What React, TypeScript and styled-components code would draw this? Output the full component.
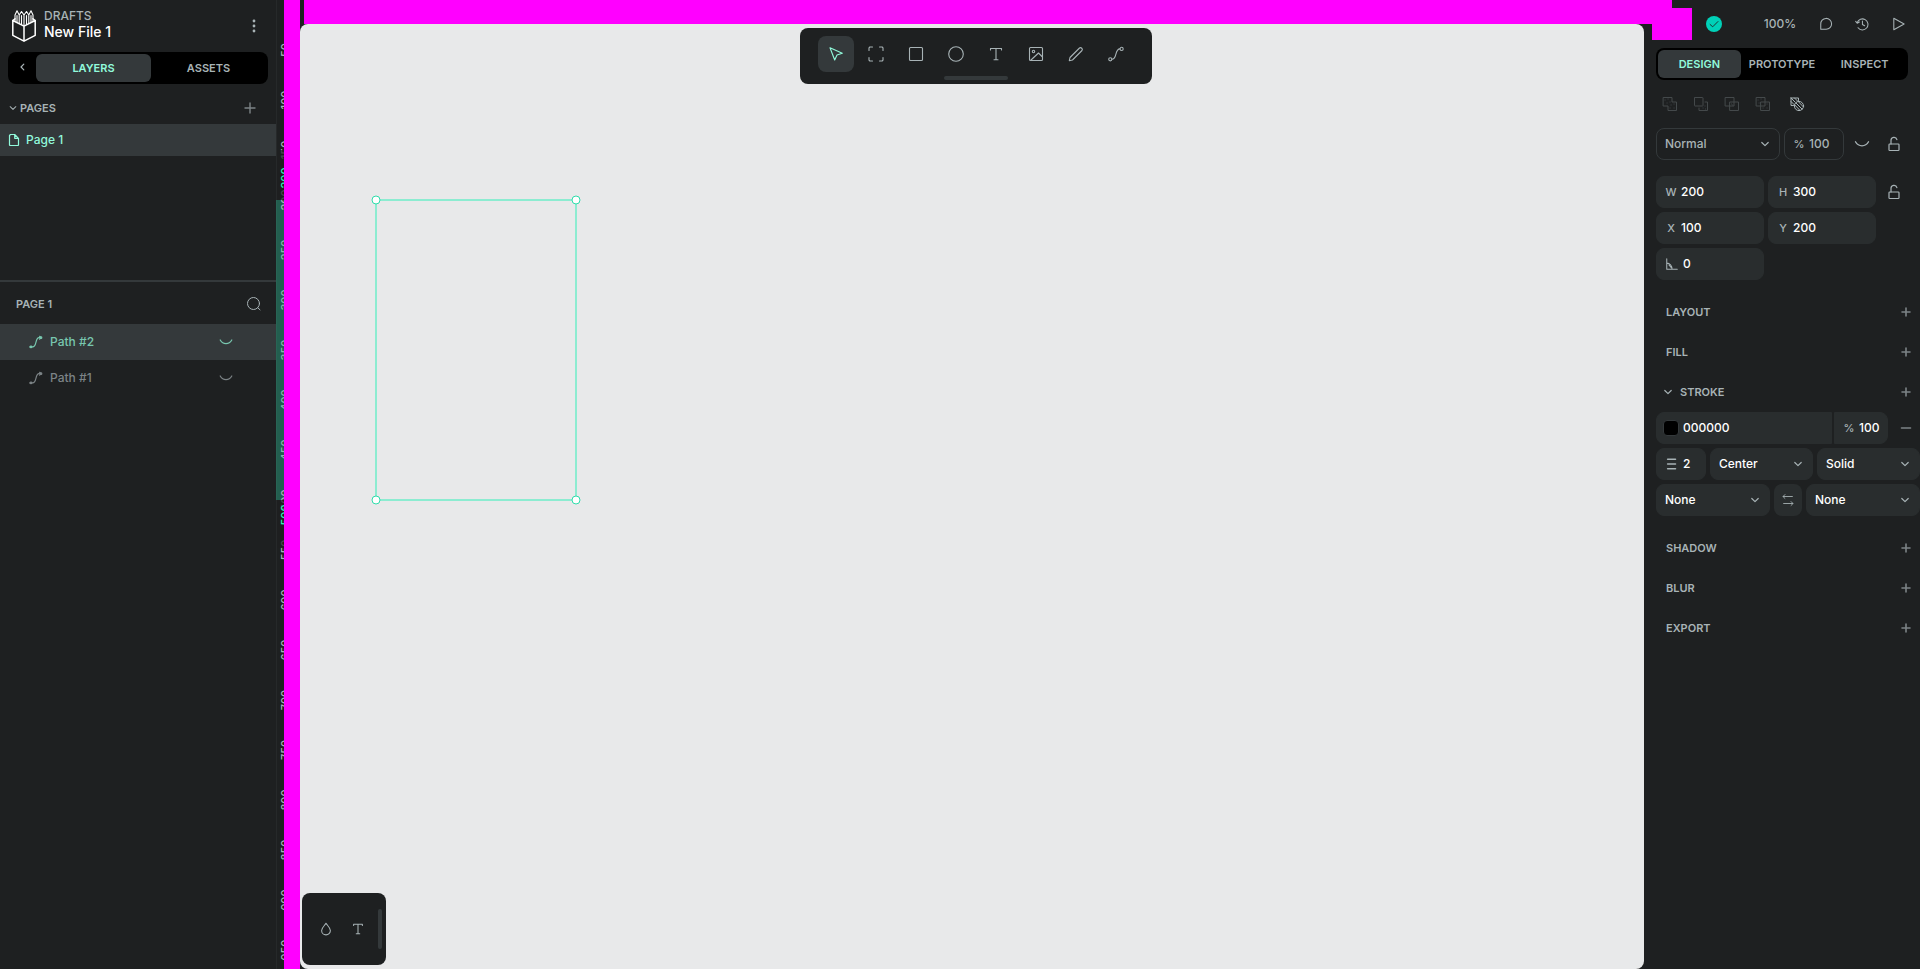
import React from "react";
import styled, { createGlobalStyle, css } from "styled-components";

const color = {
  panel: "#1e2021",
  raised: "#34393b",
  field: "#292d2e",
  black: "#000000",
  board: "#e8e9ea",
  text: "#ffffff",
  muted: "#a8b3b6",
  dim: "#7c8386",
  accent: "#91fadb",
  accentSoft: "#78c7af",
  select: "#31efb8",
  teal: "#00d1b8",
  mask: "#ff00ff",
};

const GlobalStyle = createGlobalStyle`
  * { box-sizing: border-box; }
  body {
    margin: 0;
    background: ${color.panel};
    color: ${color.muted};
    font: 500 12px/16px Inter, "Liberation Sans", sans-serif;
  }
  button, input, select { font: inherit; color: inherit; }
  h1, h2, p, ul { margin: 0; padding: 0; font: inherit; }
`;

/* ---------- shell ---------- */

const Shell = styled.div`
  position: relative;
  display: grid;
  grid-template-columns: 276px minmax(0, 1fr) 276px;
  min-height: 100vh;
  overflow: hidden;
`;

const Sidebar = styled.aside`
  display: flex;
  flex-direction: column;
  background: ${color.panel};
`;

const IconButton = styled.button<{ $size?: number; $tone?: string }>`
  display: inline-flex;
  align-items: center;
  justify-content: center;
  flex: none;
  width: ${(p) => p.$size ?? 28}px;
  height: ${(p) => p.$size ?? 28}px;
  padding: 0;
  border: 0;
  border-radius: 8px;
  background: none;
  color: ${(p) => p.$tone ?? color.muted};
  cursor: pointer;
`;

const Svg = styled.svg`
  display: block;
  flex: none;
  fill: none;
  stroke: currentColor;
  stroke-linecap: round;
  stroke-linejoin: round;
`;

type IconProps = { size?: number; children: React.ReactNode; weight?: number };
const Icon = ({ size = 16, weight = 1, children }: IconProps) => (
  <Svg width={size} height={size} viewBox="0 0 16 16" strokeWidth={weight} aria-hidden="true">
    {children}
  </Svg>
);

const Plus = () => <Icon weight={1.6}><path d="M8 4v8M4 8h8" /></Icon>;
const ChevronDown = ({ size = 16 }: { size?: number }) => (
  <Icon size={size} weight={1.2}><path d="M4.800 6.500 8 9.600l3.200-3.100" /></Icon>
);
const EyeClosed = ({ size = 16 }: { size?: number }) => (
  <Icon size={size} weight={1.2}><path d="M2.200 6c2.800 4.800 8.800 4.800 11.600 0" /></Icon>
);
const PathIcon = () => (
  <Icon weight={1.1}>
    <circle cx="2.300" cy="13.300" r="1.600" />
    <circle cx="13.600" cy="2.900" r="1.600" />
    <path d="M3.900 13.300C9.500 13.300 6.300 2.900 12 2.900" />
  </Icon>
);
const SmallPathIcon = () => (
  <Icon weight={1.2}>
    <circle cx="3" cy="12.900" r=".8" />
    <circle cx="13" cy="3.700" r=".8" />
    <path d="M1.800 12.900h2.800C9 12.900 7 3.700 11 3.700h2M11.600 2.300 13.300 3.700l-1.700 1.400" />
  </Icon>
);
const LockOpen = () => (
  <Icon weight={1.2}>
    <rect x="3" y="8" width="10" height="6.500" rx=".8" />
    <path d="M5 8V4.500a3 3 0 0 1 5.900-.9" />
  </Icon>
);

/* ---------- left side ---------- */

const FileHeader = styled.header`
  display: flex;
  align-items: center;
  height: 52px;
  padding: 0 8px 0 12px;
  gap: 8px;
`;

const FileNames = styled.div`
  flex: 1;
  padding-bottom: 4px;
`;

const FileName = styled.h1`
  font-size: 14px;
  color: ${color.text};
`;

const TabBar = styled.div<{ $side?: number }>`
  display: flex;
  height: 32px;
  margin: 0 ${(p) => p.$side ?? 8}px;
  padding: 2px;
  border-radius: 8px;
  background: ${color.black};
`;

const Tab = styled.button<{ $active?: boolean }>`
  flex: 1 1 0;
  padding: 0;
  border: 0;
  border-radius: 6px;
  font-size: 11px;
  font-weight: 600;
  text-transform: uppercase;
  background: ${(p) => (p.$active ? color.raised : "transparent")};
  color: ${(p) => (p.$active ? color.accent : color.muted)};
`;

const PagesPanel = styled.section`
  height: 198px;
  border-bottom: 2px solid ${color.raised};
`;

const PagesHeader = styled.div`
  display: flex;
  align-items: center;
  height: 40px;
  padding: 8px 12px 0 6px;
`;

const Caption = styled.h2`
  flex: 1;
  font-size: 11px;
  font-weight: 600;
  line-height: 16px;
  text-transform: uppercase;
`;

const Item = styled.li<{ $active?: boolean; $tall?: boolean }>`
  display: flex;
  align-items: center;
  height: ${(p) => (p.$tall ? 36 : 32)}px;
  padding: ${(p) => (p.$tall ? "0 36px 0 28px" : "0 6px")};
  gap: ${(p) => (p.$tall ? 6 : 4)}px;
  list-style: none;
  background: ${(p) => (p.$active ? color.raised : "transparent")};
  color: ${(p) => (!p.$tall ? color.accent : p.$active ? color.accentSoft : color.dim)};
`;

const ItemName = styled.span`
  flex: 1;
`;

const LayersHeader = styled.div`
  display: flex;
  align-items: center;
  height: 42px;
  padding: 2px 8px 0 16px;
`;

const Logo = () => (
  <Svg width="24" height="32" viewBox="0 0 24 32" strokeWidth="1.500" color={color.text} aria-label="Penpot" role="img">
    <path d="M.8 10.500 12 16.200l11.200-5.700v14.800L12 31.200.8 25.300ZM12 16.200v15" />
    <path d="M3 8.800.8 10.500M21 8.800l2.200 1.700" />
    <path
      strokeWidth="1.100"
      d="M3 11.500V5L5 .8 7.200 5v8.500M7.200 5 9.500 1.500 12 5l2.500-3.500L16.800 5v8.500M16.800 5 19 .8 21 5v6.500M9.500 5.500v9M14.500 5.500v9M12 5v11M5 5.500v7M19 5.500v7"
    />
  </Svg>
);

const LeftSidebar = () => (
  <Sidebar>
    <FileHeader>
      <Logo />
      <FileNames>
        <p>DRAFTS</p>
        <FileName>New File 1</FileName>
      </FileNames>
      <IconButton aria-label="File menu">
        <Icon>
          <g fill="currentColor" stroke="none">
            <circle cx="8" cy="3" r="1.400" /><circle cx="8" cy="8" r="1.400" /><circle cx="8" cy="13" r="1.400" />
          </g>
        </Icon>
      </IconButton>
    </FileHeader>
    <TabBar>
      <IconButton $size={26} aria-label="Collapse panel">
        <Icon weight={1.2}><path d="M8.800 5.200 6 8l2.800 2.800" /></Icon>
      </IconButton>
      <Tab $active>Layers</Tab>
      <Tab>Assets</Tab>
    </TabBar>
    <PagesPanel>
      <PagesHeader>
        <ChevronDown size={14} />
        <Caption>Pages</Caption>
        <IconButton aria-label="Add page" $tone={color.dim}>
          <Icon weight={1.400}><path d="M8 3v10M3 8h10" /></Icon>
        </IconButton>
      </PagesHeader>
      <ul>
        <Item $active>
          <Icon weight={1.2}>
            <path d="M4.500 2.500h4.200l3.800 3.800v6.700l-.5.500H4l-.5-.5V3.500ZM8.700 2.500v3.800h3.800" />
          </Icon>
          <ItemName>Page 1</ItemName>
        </Item>
      </ul>
    </PagesPanel>
    <LayersHeader>
      <Caption>Page 1</Caption>
      <IconButton aria-label="Search layers">
        <Icon><circle cx="7.500" cy="7.500" r="6" /><path d="m11.800 11.800 2.200 2" /></Icon>
      </IconButton>
    </LayersHeader>
    <ul>
      {["Path #2", "Path #1"].map((name, i) => (
        <Item key={name} $tall $active={i === 0}>
          <SmallPathIcon />
          <ItemName>{name}</ItemName>
          <IconButton $tone="inherit" aria-label={`Show ${name}`}><EyeClosed /></IconButton>
        </Item>
      ))}
    </ul>
  </Sidebar>
);

/* ---------- canvas ---------- */

const Workspace = styled.main`
  position: relative;
  display: grid;
  grid-template: 24px minmax(0, 1fr) / 24px minmax(0, 1fr);
  background: ${color.panel};
`;

const Board = styled.div`
  position: relative;
  grid-area: 2 / 2;
  display: flex;
  flex-direction: column;
  justify-content: space-between;
  border-radius: 8px;
  padding: 4px 2px;
  background: ${color.board};
`;

const Ruler = styled.svg`
  position: absolute;
  inset: 0 auto 0 0;
  width: 24px;
  height: 100%;
  font: 500 11px/16px Inter, sans-serif;
  text-anchor: middle;
`;

const Selection = styled.svg`
  position: absolute;
  left: 70px;
  top: 170px;
  stroke: ${color.select};
`;

const Toolbar = styled.div`
  position: relative;
  align-self: center;
  display: flex;
  gap: 4px;
  height: 56px;
  margin-left: 8px;
  padding: 8px 18px;
  border-radius: 8px;
  background: ${color.panel};
`;

const Tool = styled(IconButton)<{ $active?: boolean }>`
  width: 36px;
  height: 36px;
  ${(p) => p.$active && css`
    background: ${color.raised};
    color: ${color.accent};
  `}
`;

const Grip = styled.span<{ $vertical?: boolean }>`
  position: absolute;
  border-radius: 2px;
  background: ${color.raised};
  ${(p) => p.$vertical
    ? css`right: 4px; top: 16px; bottom: 16px; width: 4px;`
    : css`left: 144px; right: 144px; bottom: 4px; height: 4px;`}
`;

const Palette = styled.div`
  position: relative;
  display: flex;
  align-items: center;
  gap: 4px;
  width: 84px;
  height: 72px;
  padding-left: 10px;
  border-radius: 8px;
  background: ${color.panel};
`;

const tools: [string, React.ReactNode][] = [
  ["Move", <path d="m2 1.800 12.300 5.500-5.300 1.700L6.700 14Z" />],
  ["Board", <path d="M1 4.500V1.800L1.800 1H4.500M11.500 1h2.700l.8.8v2.700M15 11.500v2.700l-.8.8h-2.700M4.500 15H1.800l-.8-.8v-2.700" />],
  ["Rectangle", <rect x="1.500" y="1.500" width="13" height="13" rx="1" />],
  ["Ellipse", <circle cx="8" cy="8" r="7.300" />],
  ["Text", <path d="M2.500 4V2.500h11V4M8 2.500v11.300M6 13.800h4" />],
  ["Image", <g><rect x="1.500" y="1.500" width="13" height="13" rx="1" /><circle cx="5.500" cy="5.500" r="1.200" /><path d="m3 14 7.500-7 4 4" /></g>],
  ["Curve", <path d="M2 11.500 11.500 2c1.500-1.200 3.700 1 2.500 2.500L4.500 14 1.300 14.700Z" />],
];

const rulerMarks = Array.from({ length: 19 }, (_, i) => (i + 1) * 50);

const Canvas = () => (
  <Workspace>
    <Ruler aria-hidden="true">
      <rect width="1" height="100%" fill="#26292a" />
      <rect y="200" width="24" height="300" fill={color.select} fillOpacity=".3" />
      {rulerMarks.map((n) => (
        <text
          key={n}
          transform={`translate(13 ${n}) rotate(-90)`}
          fill={n > 200 && n < 500 ? "#8ab8ab" : color.muted}
        >
          {n}
        </text>
      ))}
      <g fill={color.panel} fillOpacity=".7">
        <rect y="150" x="1" width="23" height="50" />
        <rect y="500" x="1" width="23" height="48" />
      </g>
      <text transform="translate(13 178) rotate(-90)" fill={color.select}>200</text>
      <text transform="translate(13 515) rotate(-90)" fill={color.select}>500</text>
    </Ruler>
    <Board>
      <Selection width="212" height="312" fill="none">
        <rect x="6" y="6" width="200" height="300" />
        {[[6, 6], [206, 6], [6, 306], [206, 306]].map(([x, y]) => (
          <circle key={`${x}-${y}`} cx={x} cy={y} r="4" fill="#fff" stroke="#2fdcab" />
        ))}
      </Selection>
      <Toolbar role="toolbar" aria-label="Drawing tools">
        {tools.map(([name, drawing], i) => (
          <Tool key={name} $active={i === 0} aria-label={name}><Icon weight={1.1}>{drawing}</Icon></Tool>
        ))}
        <Tool aria-label="Path"><PathIcon /></Tool>
        <Grip />
      </Toolbar>
      <Palette>
        <IconButton aria-label="Color palette">
          <Icon size={14} weight={1.2}><path d="M8 1.500C6.500 4 3 6.500 3 9.700a5 5 0 0 0 10 0C13 6.500 9.500 4 8 1.500Z" /></Icon>
        </IconButton>
        <IconButton aria-label="Typographies">
          <Icon size={14} weight={1.2}><path d="M3 4V2.500h10V4M8 2.500v11M6 13.500h4" /></Icon>
        </IconButton>
        <Grip $vertical />
      </Palette>
    </Board>
  </Workspace>
);

/* ---------- right side ---------- */

const ViewHeader = styled.header`
  display: flex;
  align-items: center;
  justify-content: flex-end;
  height: 48px;
  padding-right: 4px;
`;

const Saved = styled.span`
  display: grid;
  place-items: center;
  width: 16px;
  height: 16px;
  margin-right: 36px;
  border-radius: 50%;
  background: ${color.teal};
  color: ${color.panel};
`;

const Zoom = styled.button`
  width: 44px;
  margin-right: 6px;
  padding: 0;
  border: 0;
  background: none;
`;

const Form = styled.form`
  display: flex;
  flex-direction: column;
  gap: 4px;
  padding-left: 12px;
`;

const Row = styled.div<{ $gap?: number }>`
  display: flex;
  align-items: center;
  gap: ${(p) => p.$gap ?? 4}px;
`;

const BooleanRow = styled(Row)`
  height: 44px;
  padding-top: 4px;
`;

const BlendRow = styled(Row)`
  margin-bottom: 12px;
`;

const ColorRow = styled(Row)`
  ${IconButton} { margin-left: auto; }
`;

const Field = styled.label<{ $width: number; $outline?: boolean; $corners?: string }>`
  display: flex;
  align-items: center;
  flex: none;
  gap: 4px;
  width: ${(p) => p.$width}px;
  height: 32px;
  padding: 0 6px 0 8px;
  border: 1px solid ${(p) => (p.$outline ? color.raised : color.field)};
  border-radius: ${(p) => p.$corners ?? "8px"};
  background: ${(p) => (p.$outline ? "none" : color.field)};
  color: ${color.muted};
`;

const Unit = styled.span`
  min-width: 12px;
  font-size: 11px;
  text-align: center;
`;

const Input = styled.input<{ $quiet?: boolean }>`
  flex: 1;
  width: 0;
  min-width: 0;
  padding: 0;
  border: 0;
  outline: 0;
  background: none;
  color: ${(p) => (p.$quiet ? color.muted : color.text)};
`;

const Select = styled.select<{ $quiet?: boolean }>`
  flex: 1;
  min-width: 0;
  padding: 0;
  border: 0;
  outline: 0;
  appearance: none;
  background: none;
  color: ${(p) => (p.$quiet ? color.muted : color.text)};
`;

const Swatch = styled.span`
  width: 16px;
  height: 16px;
  margin-left: -2px;
  border: 1px solid ${color.raised};
  border-radius: 4px;
  background: ${color.black};
`;

const SwapButton = styled(IconButton)`
  height: 32px;
  background: ${color.field};
`;

const SectionBar = styled.div<{ $foldable?: boolean }>`
  display: flex;
  align-items: center;
  height: 36px;
  padding-left: ${(p) => (p.$foldable ? 4 : 10)}px;
  gap: 4px;
`;

const Sections = styled.div`
  display: flex;
  flex-direction: column;
  gap: 4px;
  margin-top: 10px;
`;

const StrokeRows = styled.div`
  display: flex;
  flex-direction: column;
  gap: 4px;
  margin: -2px 0 10px;
`;

const Section = ({ name, foldable }: { name: string; foldable?: boolean }) => (
  <SectionBar $foldable={foldable}>
    {foldable && <ChevronDown />}
    <Caption>{name}</Caption>
    <IconButton type="button" $tone={color.dim} aria-label={`Add ${name}`}><Plus /></IconButton>
  </SectionBar>
);

type PickProps = { label: string; value: string; width: number; outline?: boolean };
const Pick = ({ label, value, width, outline }: PickProps) => (
  <Field $width={width} $outline={outline}>
    <Select aria-label={label} defaultValue={value} $quiet={outline}>
      <option>{value}</option>
    </Select>
    <ChevronDown />
  </Field>
);

const Measure = ({ label, value }: { label: string; value: string }) => (
  <Field $width={108}>
    <Unit>{label}</Unit>
    <Input defaultValue={value} />
  </Field>
);

const booleans: [string, React.ReactNode][] = [
  ["Union", <g><path d="M1.500 1.500h8.500v4.500h4.500v8.500H6V10H1.500Z" /><path d="M3 4h.1M6 3h.1M8 6h.1M5 7h.1M9 9h.1M12 8h.1M8 12h.1M12 12h.1" /></g>],
  ["Difference", <g><rect x="1.500" y="1.500" width="8.500" height="8.500" rx=".5" /><path d="M12 6h2.500v8.500H6V12M10 12h.1M12 10h.1M12.500 13h.1" /></g>],
  ["Intersection", <g><rect x="1.500" y="1.500" width="8.500" height="8.500" /><rect x="6" y="6" width="8.500" height="8.500" /><path d="M7.500 8h.1M8.500 9h.1" /></g>],
  ["Exclude", <g><rect x="1.500" y="1.500" width="8.500" height="8.500" /><rect x="6" y="6" width="8.500" height="8.500" /><path d="M3 4h.1M6 3h.1M4 7h.1M12 8h.1M8 12h.1M12 12h.1" /></g>],
];

const RightSidebar = () => (
  <Sidebar>
    <ViewHeader>
      <Saved><Icon size={14}><path d="m3.500 8.500 3 2.700 6-6" /></Icon></Saved>
      <Zoom>100%</Zoom>
      <IconButton $size={36} aria-label="Comments">
        <Icon size={14} weight={1.2}><path d="M2 14V8.200A6.200 6.200 0 1 1 8.200 14Z" /></Icon>
      </IconButton>
      <IconButton $size={36} aria-label="History">
        <Icon size={14} weight={1.2}><path d="M2.500 6.500A6.300 6.300 0 1 1 3.500 12.300M.8 5l1.700 2.200L5 5.800M8.500 4.500v4l2.500 1.500" /></Icon>
      </IconButton>
      <IconButton $size={36} aria-label="Play prototype">
        <Icon size={14} weight={1.2}><path d="M3.200 1.500 15 8 3.200 14.500Z" /></Icon>
      </IconButton>
    </ViewHeader>
    <TabBar $side={12}>
      <Tab $active>Design</Tab>
      <Tab>Prototype</Tab>
      <Tab>Inspect</Tab>
    </TabBar>
    <Form>
      <BooleanRow $gap={6}>
        <Row $gap={3}>
          {booleans.map(([name, drawing]) => (
            <IconButton type="button" key={name} aria-label={name} $tone="#44494b"><Icon>{drawing}</Icon></IconButton>
          ))}
        </Row>
        <IconButton type="button" aria-label="Flatten">
          <Icon>
            <path d="M2 2h7.500v2.500M2 2v7.500h2.500M2 2l4 4M5.500 2l3 3M2 5.500l3 3" />
            <circle cx="10" cy="10" r="4.600" />
            <path d="m6.800 6.800 6.400 6.400M5.800 9l4.800 5M9.500 5.800l4.800 5" />
          </Icon>
        </IconButton>
      </BooleanRow>
      <BlendRow>
        <Pick label="Blend mode" value="Normal" width={124} outline />
        <Field $width={60} $outline>
          <Unit>%</Unit>
          <Input defaultValue="100" $quiet />
        </Field>
        <IconButton type="button" aria-label="Toggle visibility"><EyeClosed size={18} /></IconButton>
        <IconButton type="button" aria-label="Toggle lock"><LockOpen /></IconButton>
      </BlendRow>
      <Row>
        <Measure label="W" value="200" />
        <Measure label="H" value="300" />
        <IconButton type="button" aria-label="Lock proportions"><LockOpen /></IconButton>
      </Row>
      <Row>
        <Measure label="X" value="100" />
        <Measure label="Y" value="200" />
      </Row>
      <Field $width={108}>
        <Icon size={14} weight={1.2}><path d="M2 2v12h12M2 7c3.500 0 6 3 6 7M4.500 9l2.500 3" /></Icon>
        <Input aria-label="Rotation" defaultValue="0" />
      </Field>
      <Sections>
        <Section name="Layout" />
        <Section name="Fill" />
        <Section name="Stroke" foldable />
        <StrokeRows>
          <ColorRow $gap={2}>
            <Field $width={176} $corners="8px 0 0 8px">
              <Swatch />
              <Input aria-label="Stroke color" defaultValue="000000" />
            </Field>
            <Field $width={54} $corners="0 8px 8px 0">
              <Unit>%</Unit>
              <Input aria-label="Stroke opacity" defaultValue="100" />
            </Field>
            <IconButton type="button" aria-label="Remove stroke" $tone={color.dim}>
              <Icon weight={1.600}><path d="M3.500 8h9" /></Icon>
            </IconButton>
          </ColorRow>
          <Row>
            <Field $width={50}>
              <Icon size={14} weight={1.800}><path d="M3 2.500h9M3 8h9M3 13.500h9" /></Icon>
              <Input aria-label="Stroke width" defaultValue="2" />
            </Field>
            <Pick label="Stroke position" value="Center" width={103} />
            <Pick label="Stroke style" value="Solid" width={103} />
          </Row>
          <Row>
            <Pick label="Start cap" value="None" width={114} />
            <SwapButton type="button" aria-label="Swap caps">
              <Icon size={14}><path d="M13 4H2.500M4.500 1.800 2.300 4l2.200 2.200M3 12h10.500M11.500 9.800l2.200 2.200-2.200 2.200" /></Icon>
            </SwapButton>
            <Pick label="End cap" value="None" width={114} />
          </Row>
        </StrokeRows>
        <Section name="Shadow" />
        <Section name="Blur" />
        <Section name="Export" />
      </Sections>
    </Form>
  </Sidebar>
);

/* ---------- magenta blocks over the rulers ---------- */

const MaskLeft = styled.div`
  position: absolute;
  inset: 0 auto 0 284px;
  width: 16px;
  background: ${color.mask};
`;

const MaskTop = styled.div`
  position: absolute;
  inset: 0 248px auto 304px;
  height: 24px;
  background: ${color.mask};
`;

const MaskCorner = styled.div`
  position: absolute;
  top: 8px;
  right: 228px;
  width: 40px;
  height: 32px;
  background: ${color.mask};
`;

export default function App() {
  return (
    <>
      <GlobalStyle />
      <Shell>
        <LeftSidebar />
        <Canvas />
        <RightSidebar />
        <MaskLeft />
        <MaskTop />
        <MaskCorner />
      </Shell>
    </>
  );
}
